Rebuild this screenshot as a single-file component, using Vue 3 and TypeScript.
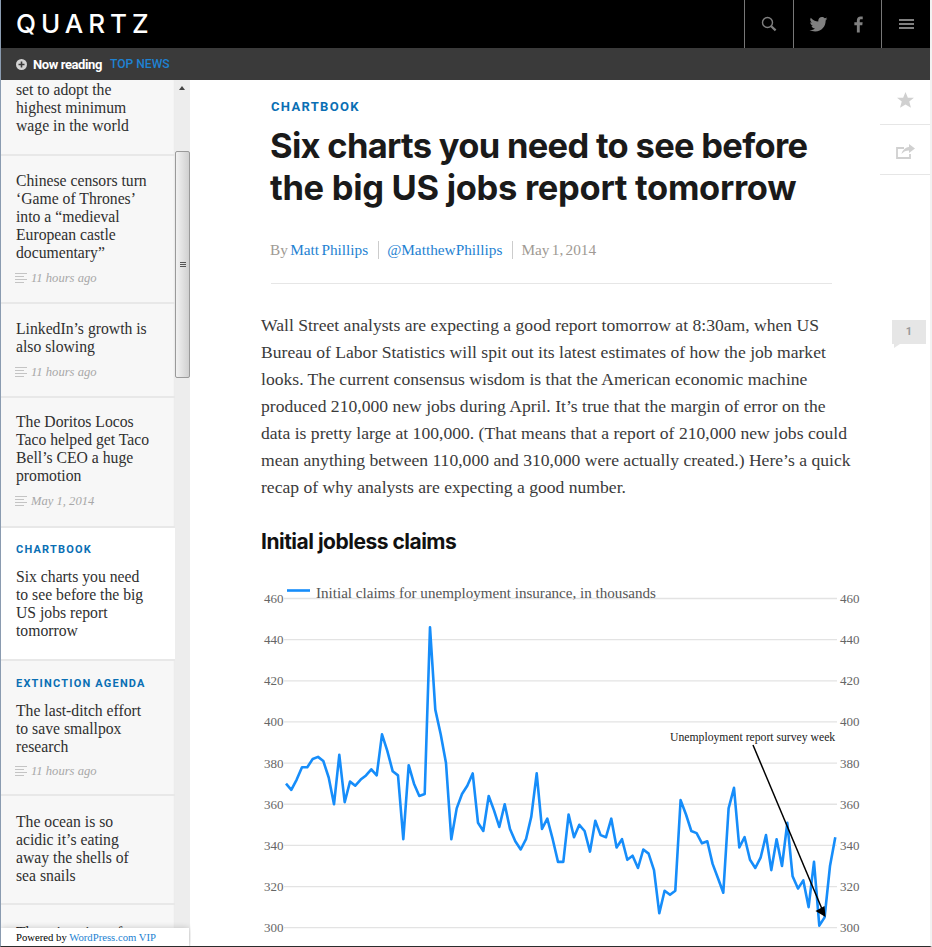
<script setup lang="ts">
interface Story {
  kicker?: string
  lines: string[]
  time?: string
  active?: boolean
}

const stories: Story[] = [
  { lines: ['set to adopt the', 'highest minimum', 'wage in the world'] },
  {
    lines: ['Chinese censors turn', '‘Game of Thrones’', 'into a “medieval', 'European castle', 'documentary”'],
    time: '11 hours ago'
  },
  { lines: ['LinkedIn’s growth is', 'also slowing'], time: '11 hours ago' },
  {
    lines: ['The Doritos Locos', 'Taco helped get Taco', 'Bell’s CEO a huge', 'promotion'],
    time: 'May 1, 2014'
  },
  {
    kicker: 'CHARTBOOK',
    lines: ['Six charts you need', 'to see before the big', 'US jobs report', 'tomorrow'],
    active: true
  },
  {
    kicker: 'EXTINCTION AGENDA',
    lines: ['The last-ditch effort', 'to save smallpox', 'research'],
    time: '11 hours ago'
  },
  { lines: ['The ocean is so', 'acidic it’s eating', 'away the shells of', 'sea snails'] }
]

const intro = [
  'Wall Street analysts are expecting a good report tomorrow at 8:30am, when US',
  'Bureau of Labor Statistics will spit out its latest estimates of how the job market',
  'looks. The current consensus wisdom is that the American economic machine',
  'produced 210,000 new jobs during April. It’s true that the margin of error on the',
  'data is pretty large at 100,000. (That means that a report of 210,000 new jobs could',
  'mean anything between 110,000 and 310,000 were actually created.) Here’s a quick',
  'recap of why analysts are expecting a good number.'
]

const ticks = [460, 440, 420, 400, 380, 360, 340, 320, 300]

const claims = [
  370, 367, 372, 378, 378, 382, 383, 381, 373, 360, 384, 361, 371, 369, 372, 374, 377, 374, 394, 386,
  376, 374, 343, 379, 370, 364, 365, 446, 406, 394, 380, 343, 358, 365, 369, 375, 351, 347, 364, 357,
  349, 360, 348, 342, 338, 343, 354, 375, 348, 353, 343, 332, 332, 355, 344, 350, 347, 337, 352, 345,
  344, 353, 339, 343, 333, 335, 329, 338, 336, 328, 307, 318, 316, 318, 362, 355, 347, 346, 341, 342,
  331, 324, 317, 358, 368, 339, 344, 333, 329, 334, 345, 328, 343, 330, 351, 325, 319, 323, 310, 332,
  301, 305, 330, 344
]

const yFor = (v: number) => (460 - v) * 2.0575 + 19.5
const linePoints = claims
  .map((v, i) => `${(25 + (i * 549.3) / (claims.length - 1)).toFixed(1)},${yFor(v).toFixed(1)}`)
  .join(' ')
</script>

<template>
  <div class="page">
    <span class="edge-thumb"></span>
    <header class="topbar">
      <div class="logo">QUARTZ</div>
      <nav class="tools">
        <div class="tool tool-search">
          <svg width="16" height="16" viewBox="0 0 16 16">
            <circle cx="6.5" cy="6.5" r="5" fill="none" stroke="#808080" stroke-width="1.4" />
            <path d="M10.2 10.2 L14.6 14.4" stroke="#808080" stroke-width="2.2" />
          </svg>
        </div>
        <div class="tool tool-social">
          <svg width="19" height="15" viewBox="0 0 24 20">
            <path
              fill="#808080"
              d="M24 2.4c-.9.4-1.8.7-2.8.8 1-.6 1.800-1.600 2.200-2.700-1 .6-2 1-3.100 1.200C19.300.7 18 0 16.600 0c-2.700 0-4.900 2.200-4.900 4.900 0 .4 0 .8.100 1.100C7.700 5.800 4.100 3.900 1.700.9c-.4.700-.7 1.600-.7 2.500 0 1.700.9 3.200 2.200 4.100-.8 0-1.600-.2-2.200-.6v.1c0 2.400 1.700 4.400 3.900 4.800-.4.100-.8.200-1.300.2-.3 0-.6 0-.9-.1.600 2 2.400 3.400 4.600 3.400-1.700 1.300-3.800 2.100-6.100 2.100-.4 0-.8 0-1.200-.1C2.200 18.300 4.800 19.200 7.500 19.200c9.100 0 14-7.500 14-14v-.6c1-.7 1.800-1.500 2.500-2.200z"
            />
          </svg>
          <svg width="9" height="17" viewBox="0 0 10 18">
            <path fill="#808080" d="M6.400 18V9.800h2.800l.4-3.200H6.400V4.600c0-.9.300-1.500 1.600-1.500h1.700V.2C9.400.100 8.400 0 7.300 0 4.900 0 3.200 1.500 3.200 4.200v2.400H.4v3.200h2.800V18z" />
          </svg>
        </div>
        <div class="tool tool-menu">
          <span></span><span></span><span></span>
        </div>
      </nav>
    </header>

    <div class="subbar">
      <span class="plus">
        <svg width="11" height="11" viewBox="0 0 11 11">
          <circle cx="5.500" cy="5.500" r="5.500" fill="#d4d4d4" />
          <path d="M5.500 2.500v6M2.500 5.500h6" stroke="#3a3a3a" stroke-width="1.600" />
        </svg>
      </span>
      <span class="now">Now reading</span>
      <span class="top-news">TOP NEWS</span>
    </div>

    <div class="main">
      <aside class="rail">
        <div class="list">
          <article
            v-for="(story, i) in stories"
            :key="i"
            class="story"
            :class="{ active: story.active, first: i === 0, 'has-kicker': story.kicker, 'has-time': story.time }"
          >
            <div v-if="story.kicker" class="kicker">{{ story.kicker }}</div>
            <div class="story-title">
              <span v-for="line in story.lines" :key="line">{{ line }}</span>
            </div>
            <div v-if="story.time" class="time">
              <svg width="12" height="11" viewBox="0 0 12 11">
                <path d="M0 .5h12M0 3.500h9M0 6.500h12M0 9.500h9" stroke="#c4c4c4" stroke-width="1" />
              </svg>
              <em>{{ story.time }}</em>
            </div>
          </article>
          <div class="story-cut">The migration of</div>
        </div>
        <div class="rail-scroll">
          <span class="arrow up"></span>
          <div class="thumb"><i></i><i></i><i></i></div>
          <span class="arrow down"></span>
        </div>
        <div class="powered">Powered by <a>WordPress.com VIP</a></div>
      </aside>

      <section class="content">
        <div class="side-actions">
          <div class="action action-star">
            <svg width="17" height="16" viewBox="0 0 18 17">
              <path fill="#d0d0d0" d="M9 0l2.500 6h6.500l-5 4.200 1.800 6.500L9 13.200l-5.800 3.500L5 10.200 0 6h6.500z" />
            </svg>
          </div>
          <div class="action action-share">
            <svg width="19" height="15" viewBox="0 0 19 15">
              <path d="M8 4H1v10h13V10" fill="none" stroke="#d0d0d0" stroke-width="1.800" />
              <path fill="#d0d0d0" d="M13 0l6 4.500-6 4.500V6.500C10 6.500 7.500 7.500 5.500 10c.7-3.500 3.500-6.500 7.500-7z" />
            </svg>
          </div>
        </div>
        <div class="note-count">1</div>

        <div class="head">
          <div class="section-label">CHARTBOOK</div>
          <h1>
            <span class="line-one">Six charts you need to see before</span>
            <span class="line-two">the big US jobs report tomorrow</span>
          </h1>
          <div class="byline">
            <span>By <a>Matt Phillips</a></span>
            <span class="sep"><a>@MatthewPhillips</a></span>
            <span class="sep">May 1, 2014</span>
          </div>
        </div>

        <div class="body-text">
          <span v-for="line in intro" :key="line">{{ line }}</span>
        </div>

        <h2>Initial jobless claims</h2>

        <svg class="chart" width="600" height="362" viewBox="0 0 600 362">
          <g v-for="t in ticks" :key="t">
            <line x1="23" x2="576" :y1="yFor(t)" :y2="yFor(t)" stroke="#e3e3e3" stroke-width="1.300" />
            <text x="3" :y="yFor(t) + 4.500" class="tick">{{ t }}</text>
            <text x="579" :y="yFor(t) + 4.500" class="tick">{{ t }}</text>
          </g>
          <line x1="26" x2="49" y1="11.500" y2="11.500" stroke="#168dfa" stroke-width="2.600" />
          <text x="55" y="19" class="legend">Initial claims for unemployment insurance, in thousands</text>
          <polyline :points="linePoints" fill="none" stroke="#168dfa" stroke-width="2.600" stroke-linejoin="round" />
          <text x="409" y="162" class="annot">Unemployment report survey week</text>
          <line x1="492" y1="166" x2="561" y2="330" stroke="#000" stroke-width="1.500" />
          <path d="M564.500 338 L554.500 332 L563.500 327 Z" fill="#000" />
        </svg>
      </section>
    </div>
  </div>
</template>

<style scoped>
.page {
  position: relative;
  width: 932px;
  height: 947px;
  box-sizing: border-box;
  border-left: 1px solid #8a9bb0;
  border-right: 2px solid #f2f2f2;
  border-bottom: 1px solid #2c2c2c;
  display: flex;
  flex-direction: column;
  overflow: hidden;
  background: #fff;
  font-family: "Liberation Serif", "DejaVu Serif", serif;
}

.edge-thumb {
  position: absolute;
  top: 18px;
  right: -1px;
  width: 1px;
  height: 106px;
  background: #a8a8a8;
}

.topbar {
  height: 48px;
  flex: none;
  background: #000;
  display: flex;
  justify-content: space-between;
}

.logo {
  padding-left: 15px;
  font-family: Inter, "Liberation Sans", sans-serif;
  font-size: 26px;
  line-height: 48px;
  font-weight: 500;
  letter-spacing: 5px;
  color: #fff;
}

.tools {
  display: flex;
}

.tool {
  height: 48px;
  border-left: 1px solid #777;
  display: flex;
  align-items: center;
  justify-content: center;
  box-sizing: border-box;
}

.tool-search {
  width: 49px;
}

.tool-social {
  width: 88px;
  gap: 26px;
  padding-right: 3px;
}

.tool-menu {
  width: 49px;
  flex-direction: column;
  gap: 2px;
}

.tool-menu span {
  width: 15px;
  height: 2px;
  background: #808080;
}

.subbar {
  height: 32px;
  flex: none;
  background: #3a3a3a;
  display: flex;
  align-items: center;
  padding-left: 15px;
  font-family: Roboto, "Liberation Sans", sans-serif;
  font-size: 13px;
}

.plus {
  display: flex;
  margin-right: 6px;
}

.now {
  color: #fff;
  font-weight: 700;
  letter-spacing: -0.400px;
  margin-right: 8px;
}

.top-news {
  color: #1e82d2;
  font-size: 12.100px;
  font-weight: 500;
}

.main {
  flex: 1;
  min-height: 0;
  display: flex;
}

.rail {
  position: relative;
  width: 190px;
  flex: none;
  display: flex;
  overflow: hidden;
}

.list {
  width: 174px;
  flex: none;
  background: #f7f7f7;
  box-shadow: inset -2px 0 2px -1px rgba(0, 0, 0, 0.06);
}

.story {
  padding: 17px 15px 18px;
  box-sizing: border-box;
  border-bottom: 2px solid #e8e8e8;
}

.story.first {
  padding-top: 1px;
  height: 76px;
}

.story.has-time {
  padding-top: 16px;
  padding-bottom: 15px;
}

.story:nth-child(4) {
  padding-top: 15px;
  padding-bottom: 16px;
}

.story.has-kicker {
  padding-top: 16px;
}

.story.has-kicker.has-time {
  padding-bottom: 14px;
}

.story.has-kicker.has-time .time {
  margin-top: 6px;
}

.story.active {
  background: #fff;
  padding-top: 15px;
  padding-bottom: 19px;
}

.kicker {
  font-family: Roboto, "Liberation Sans", sans-serif;
  font-size: 11px;
  font-weight: 700;
  letter-spacing: 1.200px;
  color: #0a6fb4;
  margin-bottom: 12px;
}

.story-title {
  color: #2f2f2f;
  font-size: 15.700px;
  line-height: 18px;
}

.story-title span {
  display: block;
  white-space: nowrap;
}

.time {
  display: flex;
  align-items: center;
  gap: 4px;
  margin: 7px 0 0 -1px;
  font-size: 12.600px;
  line-height: 18px;
  color: #a8a8a8;
}

.story-cut {
  padding: 19px 15px 0;
  font-size: 15.700px;
  line-height: 18px;
  color: #2f2f2f;
  white-space: nowrap;
}

.rail-scroll {
  width: 15px;
  flex: none;
  background: #ededed;
  position: relative;
}

.arrow {
  width: 0;
  height: 0;
  position: absolute;
  left: 4px;
  border-left: 3.500px solid transparent;
  border-right: 3.500px solid transparent;
}

.arrow.up {
  top: 6px;
  border-bottom: 4px solid #444;
}

.arrow.down {
  bottom: 6px;
  border-top: 4px solid #444;
}

.thumb {
  position: absolute;
  top: 71px;
  left: 0;
  width: 15px;
  height: 227px;
  box-sizing: border-box;
  border: 1px solid #9a9a9a;
  border-radius: 2px;
  background: linear-gradient(90deg, #f2f2f2, #d0d0d0);
  display: flex;
  flex-direction: column;
  justify-content: center;
  align-items: center;
  gap: 1px;
}

.thumb i {
  width: 6px;
  height: 1px;
  background: #555;
}

.powered {
  position: absolute;
  left: 0;
  bottom: 0;
  width: 188px;
  height: 18px;
  padding-left: 15px;
  box-sizing: border-box;
  background: #fff;
  box-shadow: 0 0 6px rgba(0, 0, 0, 0.2);
  font-size: 10.700px;
  line-height: 18px;
  color: #000;
}

.powered a {
  color: #1e82d2;
}

.content {
  position: relative;
  flex: 1;
  min-width: 0;
  padding-left: 70px;
  overflow: hidden;
}

.side-actions {
  position: absolute;
  top: 0;
  right: 0;
  width: 50px;
}

.action {
  display: flex;
  align-items: center;
  justify-content: center;
  border-bottom: 1px solid #e6e6e6;
  box-sizing: border-box;
}

.action-star {
  height: 45px;
  padding-bottom: 4px;
}

.action-share {
  height: 50px;
  padding-top: 4px;
}

.note-count {
  position: absolute;
  top: 240px;
  right: 4px;
  width: 34px;
  height: 24px;
  background: #e6e6e6;
  color: #9a9a9a;
  font-family: Roboto, sans-serif;
  font-size: 11px;
  font-weight: 700;
  line-height: 24px;
  text-align: center;
}

.note-count::after {
  content: "";
  position: absolute;
  left: 2px;
  top: 24px;
  border-top: 4px solid #e6e6e6;
  border-right: 6px solid transparent;
}

.head {
  width: 561px;
  height: 204px;
  margin-left: 10px;
  box-sizing: border-box;
  border-bottom: 1px solid #e6e6e6;
  padding-top: 19px;
}

.section-label {
  font-family: Roboto, "Liberation Sans", sans-serif;
  font-size: 13px;
  line-height: 16px;
  font-weight: 700;
  letter-spacing: 1.300px;
  color: #0a6fb4;
}

h1 {
  margin: 10px 0 0 -1px;
  font-family: Inter, Roboto, "Liberation Sans", sans-serif;
  font-size: 34.500px;
  line-height: 42px;
  font-weight: 700;
  color: #1a1a1a;
  white-space: nowrap;
}

h1 span {
  display: block;
}

.line-one {
  letter-spacing: -0.700px;
}

.line-two {
  letter-spacing: -0.300px;
}

.byline {
  margin: 32px 0 0 -1px;
  display: flex;
  align-items: center;
  font-size: 15.300px;
  line-height: 18px;
  word-spacing: -1.500px;
  color: #a09a94;
}

.byline a {
  color: #1e82d2;
}

.sep {
  border-left: 1px solid #ccc;
  margin-left: 10px;
  padding-left: 8px;
}

.body-text {
  margin-top: 28px;
  color: #3a3a3a;
  font-size: 17.600px;
  line-height: 27px;
}

.body-text span {
  display: block;
  white-space: nowrap;
}

h2 {
  margin: 27px 0 0;
  font-family: Inter, Roboto, "Liberation Sans", sans-serif;
  font-size: 21px;
  line-height: 28px;
  font-weight: 700;
  letter-spacing: -0.500px;
  color: #111;
}

.chart {
  display: block;
  margin-top: 23px;
}

.tick {
  font-family: "Liberation Serif", serif;
  font-size: 13px;
  fill: #666;
}

.legend {
  font-family: "Liberation Serif", serif;
  font-size: 15.100px;
  fill: #555;
}

.annot {
  font-family: "Liberation Serif", serif;
  font-size: 11.700px;
  fill: #222;
}
</style>

<style>
html,
body {
  margin: 0;
  background: #fff;
  overflow: hidden;
}
</style>
